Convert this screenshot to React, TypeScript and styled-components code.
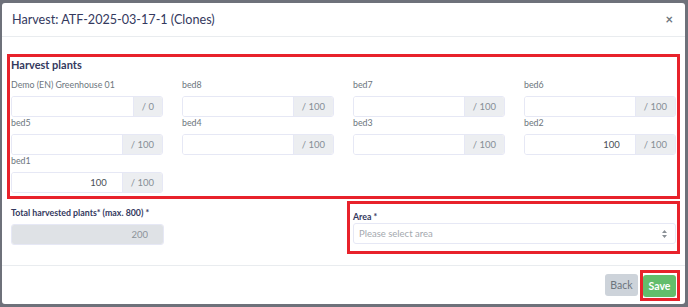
import React from 'react';
import styled, { createGlobalStyle } from 'styled-components';

const GlobalStyle = createGlobalStyle`
  html, body {
    margin: 0;
    padding: 0;
    background: #6e717a;
    font-family: Lato, 'Open Sans', Arial, sans-serif;
  }
  * {
    box-sizing: border-box;
  }
`;

const Backdrop = styled.div`
  width: 688px;
  height: 307px;
  padding: 3px 3px 3px 2px;
  background: #6e717a;
`;

const Modal = styled.div`
  display: flex;
  flex-direction: column;
  height: 301px;
  background: #fff;
  border-radius: 3px;
  overflow: hidden;
`;

const Header = styled.div`
  display: flex;
  align-items: center;
  justify-content: space-between;
  height: 35px;
  padding: 0 12px 0 10px;
  border-bottom: 1px solid #e9ecef;
`;

const Title = styled.h5`
  margin: 0;
  font-size: 12.6px;
  font-weight: 400;
  color: #34395e;
`;

const Close = styled.span`
  font-size: 13px;
  font-weight: 700;
  color: #6c757d;
  line-height: 1;
`;

const Body = styled.div`
  padding: 17px 5px 11px 5px;
`;

const Annotated = styled.div`
  border: 3px solid #e8222b;
`;

const PlantsSection = styled(Annotated)`
  padding: 0 1px 3px 1px;
`;

const SectionTitle = styled.h6`
  margin: 0;
  height: 22px;
  font-size: 11px;
  line-height: 15px;
  font-weight: 700;
  color: #34395e;
`;

const Grid = styled.div`
  display: grid;
  grid-template-columns: repeat(4, minmax(0, 1fr));
  column-gap: 19px;
`;

const Field = styled.div`
  display: flex;
  flex-direction: column;
  min-width: 0;
`;

const Label = styled.label<{ $strong?: boolean }>`
  height: 12px;
  margin-bottom: 5px;
  font-size: 8.8px;
  line-height: 12px;
  white-space: nowrap;
  color: ${(p) => (p.$strong ? '#34395e' : '#6c757d')};
  font-weight: ${(p) => (p.$strong ? 700 : 400)};
`;

const InputGroup = styled.div`
  display: flex;
  height: 21px;
  border: 1px solid #e6e8f5;
  border-radius: 3px;
  overflow: hidden;
  background: #ffffff;
`;

const Input = styled.input`
  flex: 1;
  width: 0;
  min-width: 0;
  height: 100%;
  margin: 0;
  padding: 0 15px 0 5px;
  border: none;
  outline: none;
  text-align: right;
  font-family: inherit;
  font-size: 9.5px;
  color: #495057;
  background: #ffffff;

  &:disabled {
    background: #dfe2e6;
    color: #8c939a;
  }
`;

const Addon = styled.span`
  flex: 0 0 auto;
  display: flex;
  align-items: center;
  padding: 0 8px;
  background: #eceef1;
  border-left: 1px solid #e6e8f5;
  font-size: 9.5px;
  color: #868e96;
`;

const BottomRow = styled.div`
  display: flex;
  justify-content: space-between;
  align-items: flex-start;
  margin-top: 2px;
`;

const TotalField = styled(Field)`
  width: 153px;
  margin: 6px 0 0 4px;
`;

const AreaBox = styled(Annotated)`
  width: 333px;
  padding: 0 1px 7px 3px;
`;

const AreaLabel = styled(Label)`
  margin-top: 3px;
`;

const Select = styled.div`
  display: flex;
  align-items: center;
  justify-content: space-between;
  height: 21px;
  padding: 0 8px 0 5px;
  border: 1px solid #e6e8f5;
  border-radius: 3px;
  background: #fff;
  font-size: 9.5px;
  color: #a3a8ae;
`;

const Footer = styled.div`
  display: flex;
  justify-content: flex-end;
  align-items: center;
  height: 40px;
  margin-top: auto;
  padding-right: 5px;
  border-top: 1px solid #e9ecef;
`;

const Button = styled.button<{ $variant: 'back' | 'save' }>`
  width: 33px;
  height: 22px;
  padding: 0;
  border: none;
  border-radius: 3px;
  font-family: inherit;
  font-size: 10.5px;
  font-weight: ${(p) => (p.$variant === 'save' ? 700 : 400)};
  background: ${(p) => (p.$variant === 'save' ? '#63bd6b' : '#cdd3da')};
  color: ${(p) => (p.$variant === 'save' ? '#fff' : '#6c757d')};
`;

const BackButton = styled(Button)`
  margin-right: 2px;
`;

const SaveFrame = styled(Annotated)`
  padding: 1px 1px 1px 0;
`;

const beds = [
  { name: 'Demo (EN) Greenhouse 01', value: '', max: 0 },
  { name: 'bed8', value: '', max: 100 },
  { name: 'bed7', value: '', max: 100 },
  { name: 'bed6', value: '', max: 100 },
  { name: 'bed5', value: '', max: 100 },
  { name: 'bed4', value: '', max: 100 },
  { name: 'bed3', value: '', max: 100 },
  { name: 'bed2', value: '100', max: 100 },
  { name: 'bed1', value: '100', max: 100 },
];

function SortIcon() {
  return (
    <svg width="5" height="8" viewBox="0 0 5 8">
      <path d="M2.5 0 L5 3 H0 Z M2.5 8 L5 5 H0 Z" fill="#8a9096" />
    </svg>
  );
}

export default function App() {
  return (
    <>
      <GlobalStyle />
      <Backdrop>
        <Modal>
          <Header>
            <Title>Harvest: ATF-2025-03-17-1 (Clones)</Title>
            <Close>×</Close>
          </Header>

          <Body>
            <PlantsSection>
              <SectionTitle>Harvest plants</SectionTitle>
              <Grid>
                {beds.map((bed) => (
                  <Field key={bed.name}>
                    <Label>{bed.name}</Label>
                    <InputGroup>
                      <Input readOnly value={bed.value} />
                      <Addon>/ {bed.max}</Addon>
                    </InputGroup>
                  </Field>
                ))}
              </Grid>
            </PlantsSection>

            <BottomRow>
              <TotalField>
                <Label $strong>Total harvested plants* (max. 800) *</Label>
                <InputGroup>
                  <Input disabled value="200" />
                </InputGroup>
              </TotalField>

              <AreaBox>
                <AreaLabel $strong>Area *</AreaLabel>
                <Select>
                  Please select area
                  <SortIcon />
                </Select>
              </AreaBox>
            </BottomRow>
          </Body>

          <Footer>
            <BackButton $variant="back">Back</BackButton>
            <SaveFrame>
              <Button $variant="save">Save</Button>
            </SaveFrame>
          </Footer>
        </Modal>
      </Backdrop>
    </>
  );
}
